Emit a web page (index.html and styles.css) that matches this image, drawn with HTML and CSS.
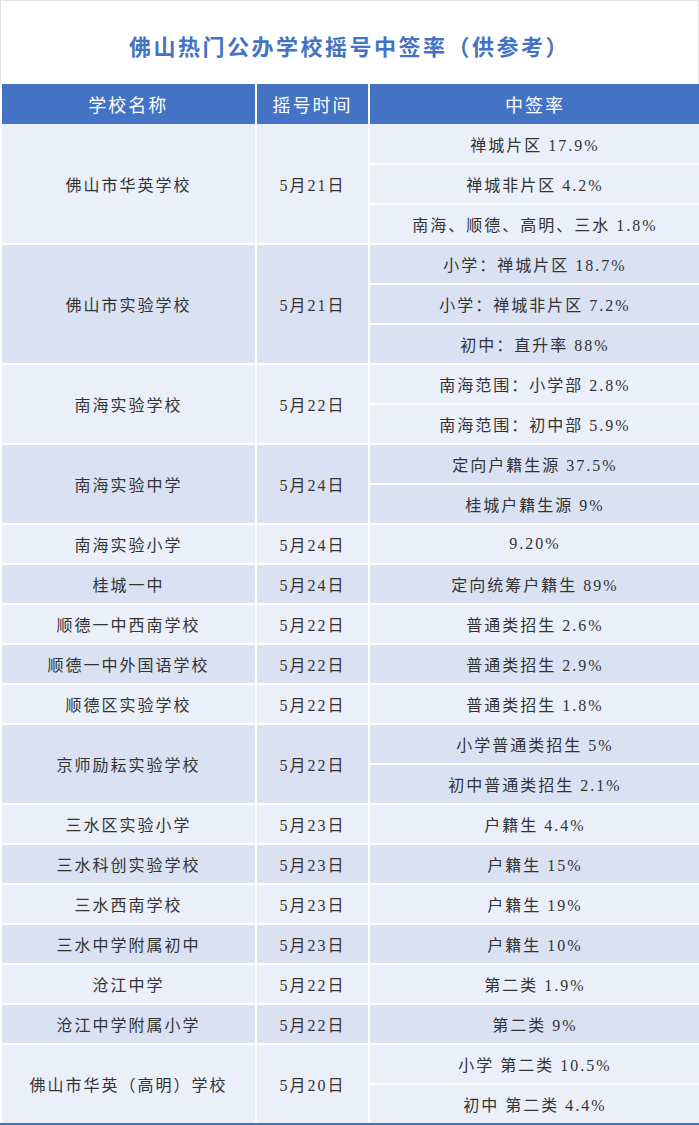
FILE: index.html
```html
<!DOCTYPE html>
<html lang="zh-CN">
<head>
<meta charset="utf-8">
<title>佛山热门公办学校摇号中签率（供参考）</title>
<link rel="stylesheet" href="styles.css">
</head>
<body>
<div class="page">
  <div class="title">佛山热门公办学校摇号中签率（供参考）</div>
  <table class="rates">
    <colgroup>
      <col class="c1"><col class="c2"><col class="c3">
    </colgroup>
    <thead>
      <tr><th>学校名称</th><th>摇号时间</th><th>中签率</th></tr>
    </thead>
    <tbody>
      <tr class="light"><td rowspan="3">佛山市华英学校</td><td rowspan="3">5月21日</td><td>禅城片区 17.9%</td></tr>
      <tr class="light"><td>禅城非片区 4.2%</td></tr>
      <tr class="light"><td>南海、顺德、高明、三水 1.8%</td></tr>

      <tr class="dark"><td rowspan="3">佛山市实验学校</td><td rowspan="3">5月21日</td><td>小学：禅城片区 18.7%</td></tr>
      <tr class="dark"><td>小学：禅城非片区 7.2%</td></tr>
      <tr class="dark"><td>初中：直升率 88%</td></tr>

      <tr class="light"><td rowspan="2">南海实验学校</td><td rowspan="2">5月22日</td><td>南海范围：小学部 2.8%</td></tr>
      <tr class="light"><td>南海范围：初中部 5.9%</td></tr>

      <tr class="dark"><td rowspan="2">南海实验中学</td><td rowspan="2">5月24日</td><td>定向户籍生源 37.5%</td></tr>
      <tr class="dark"><td>桂城户籍生源 9%</td></tr>

      <tr class="light"><td>南海实验小学</td><td>5月24日</td><td>9.20%</td></tr>
      <tr class="dark"><td>桂城一中</td><td>5月24日</td><td>定向统筹户籍生 89%</td></tr>
      <tr class="light"><td>顺德一中西南学校</td><td>5月22日</td><td>普通类招生 2.6%</td></tr>
      <tr class="dark"><td>顺德一中外国语学校</td><td>5月22日</td><td>普通类招生 2.9%</td></tr>
      <tr class="light"><td>顺德区实验学校</td><td>5月22日</td><td>普通类招生 1.8%</td></tr>

      <tr class="dark"><td rowspan="2">京师励耘实验学校</td><td rowspan="2">5月22日</td><td>小学普通类招生 5%</td></tr>
      <tr class="dark"><td>初中普通类招生 2.1%</td></tr>

      <tr class="light"><td>三水区实验小学</td><td>5月23日</td><td>户籍生 4.4%</td></tr>
      <tr class="dark"><td>三水科创实验学校</td><td>5月23日</td><td>户籍生 15%</td></tr>
      <tr class="light"><td>三水西南学校</td><td>5月23日</td><td>户籍生 19%</td></tr>
      <tr class="dark"><td>三水中学附属初中</td><td>5月23日</td><td>户籍生 10%</td></tr>
      <tr class="light"><td>沧江中学</td><td>5月22日</td><td>第二类 1.9%</td></tr>
      <tr class="dark"><td>沧江中学附属小学</td><td>5月22日</td><td>第二类 9%</td></tr>

      <tr class="light"><td rowspan="2" class="end">佛山市华英（高明）学校</td><td rowspan="2" class="end">5月20日</td><td>小学 第二类 10.5%</td></tr>
      <tr class="light"><td class="end">初中 第二类 4.4%</td></tr>
    </tbody>
  </table>
</div>
</body>
</html>
```

FILE: styles.css
```css
html, body {
  margin: 0;
  padding: 0;
  background: #ffffff;
}

body {
  font-family: "Liberation Serif", "Noto Sans CJK SC", serif;
  color: #333333;
}

.page {
  width: 699px;
}

.title {
  box-sizing: border-box;
  height: 84px;
  border: 1px solid #e3e3e3;
  border-bottom: none;
  display: flex;
  align-items: center;
  justify-content: center;
  padding-top: 4px;
  font-family: "Noto Sans CJK SC", sans-serif;
  font-size: 22px;
  font-weight: 700;
  letter-spacing: 2.5px;
  color: #4472c4;
}

.rates {
  width: 699px;
  table-layout: fixed;
  border-collapse: collapse;
}

.c1 { width: 255px; }
.c2 { width: 113px; }
.c3 { width: 331px; }

.rates th {
  height: 40px;
  padding: 0;
  background: #4472c4;
  color: #ffffff;
  font-family: "Liberation Serif", "Noto Sans CJK SC", serif;
  font-size: 18px;
  font-weight: 400;
  letter-spacing: 2px;
  text-align: center;
  border-left: 2px solid #ffffff;
  border-right: 2px solid #ffffff;
}

.rates th:first-child { border-left: 1px solid #ffffff; }
.rates th:last-child { border-right: none; }

.rates tbody tr { height: 40px; }

.rates td {
  padding: 0;
  text-align: center;
  vertical-align: middle;
  font-size: 16px;
  letter-spacing: 2px;
  border: 2px solid #ffffff;
  color: #333333;
}

.rates tbody tr:first-child td { border-top: none; }
.rates td.end { border-bottom: 2px solid #4472c4; }
.rates td:last-child { border-right: none; }

.light td { background: #ebeff9; }
.dark td { background: #d9e1f3; }
```
